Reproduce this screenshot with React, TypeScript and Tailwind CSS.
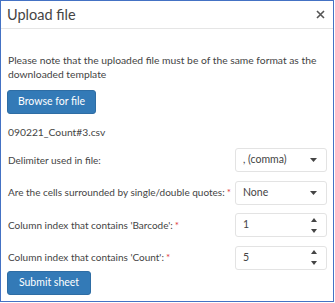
import React from "react";

const font = { fontFamily: 'Lato, "Noto Sans", sans-serif' };

function Caret() {
  return (
    <svg width="7" height="4" viewBox="0 0 7 4" className="shrink-0">
      <path d="M0 0 L7 0 L3.5 4 Z" fill="#444" />
    </svg>
  );
}

function Spinner() {
  return (
    <div className="flex flex-col items-center gap-[7px]">
      <svg width="6" height="4" viewBox="0 0 6 4">
        <path d="M0 4 L6 4 L3 0 Z" fill="#444" />
      </svg>
      <svg width="6" height="4" viewBox="0 0 6 4">
        <path d="M0 0 L6 0 L3 4 Z" fill="#444" />
      </svg>
    </div>
  );
}

function Row({
  label,
  required,
  value,
  kind,
}: {
  label: string;
  required?: boolean;
  value: string;
  kind: "select" | "number";
}) {
  return (
    <div className="flex items-center h-[24px]">
      <div className="flex-1 min-w-0 whitespace-nowrap text-[10px] text-[#444] pl-[1px]">
        {label}
        {required && <span className="text-[#e0393e] ml-[2px]">*</span>}
      </div>
      <div className="shrink-0 w-[92px] h-[24px] border border-[#e3e3e3] rounded-[3px] bg-white flex items-center justify-between pl-[7px] pr-[9px] text-[10.5px] text-[#444]">
        <span>{value}</span>
        {kind === "select" ? <Caret /> : <Spinner />}
      </div>
    </div>
  );
}

export default function App() {
  return (
    <div
      className="w-[334px] h-[302px] border border-[#4472c4] bg-white flex flex-col"
      style={font}
    >
      <div className="h-[28px] border-b border-[#e5e5e5] flex items-center justify-between pl-[6px] pr-[8px] shrink-0">
        <span className="text-[14.5px] leading-[24px] text-[#444]">Upload file</span>
        <svg width="9" height="9" viewBox="0 0 9 9">
          <path d="M1 1 L8 8 M8 1 L1 8" stroke="#555" strokeWidth="1.6" />
        </svg>
      </div>

      <div className="px-[6px] pt-[24px] flex flex-col">
        <p className="text-[10.3px] leading-[14px] text-[#444] pl-[1px]">
          Please note that the uploaded file must be of the same format as the downloaded template
        </p>
        <button className="mt-[9px] w-[89px] h-[24px] rounded-[3px] bg-[#337ab7] border border-[#2e6da4] text-white text-[10.5px]">
          Browse for file
        </button>
        <div className="mt-[11px] text-[10.3px] leading-[14px] text-[#444] pl-[1px]">
          090221_Count#3.csv
        </div>

        <div className="mt-[9px] flex flex-col gap-[8.5px]">
          <Row label="Delimiter used in file:" value=", (comma)" kind="select" />
          <Row
            label="Are the cells surrounded by single/double quotes:"
            required
            value="None"
            kind="select"
          />
          <Row label="Column index that contains 'Barcode':" required value="1" kind="number" />
          <Row label="Column index that contains 'Count':" required value="5" kind="number" />
        </div>

        <button className="mt-[1px] w-[84px] h-[24px] rounded-[3px] bg-[#337ab7] border border-[#2e6da4] text-white text-[10.5px]">
          Submit sheet
        </button>
      </div>
    </div>
  );
}
